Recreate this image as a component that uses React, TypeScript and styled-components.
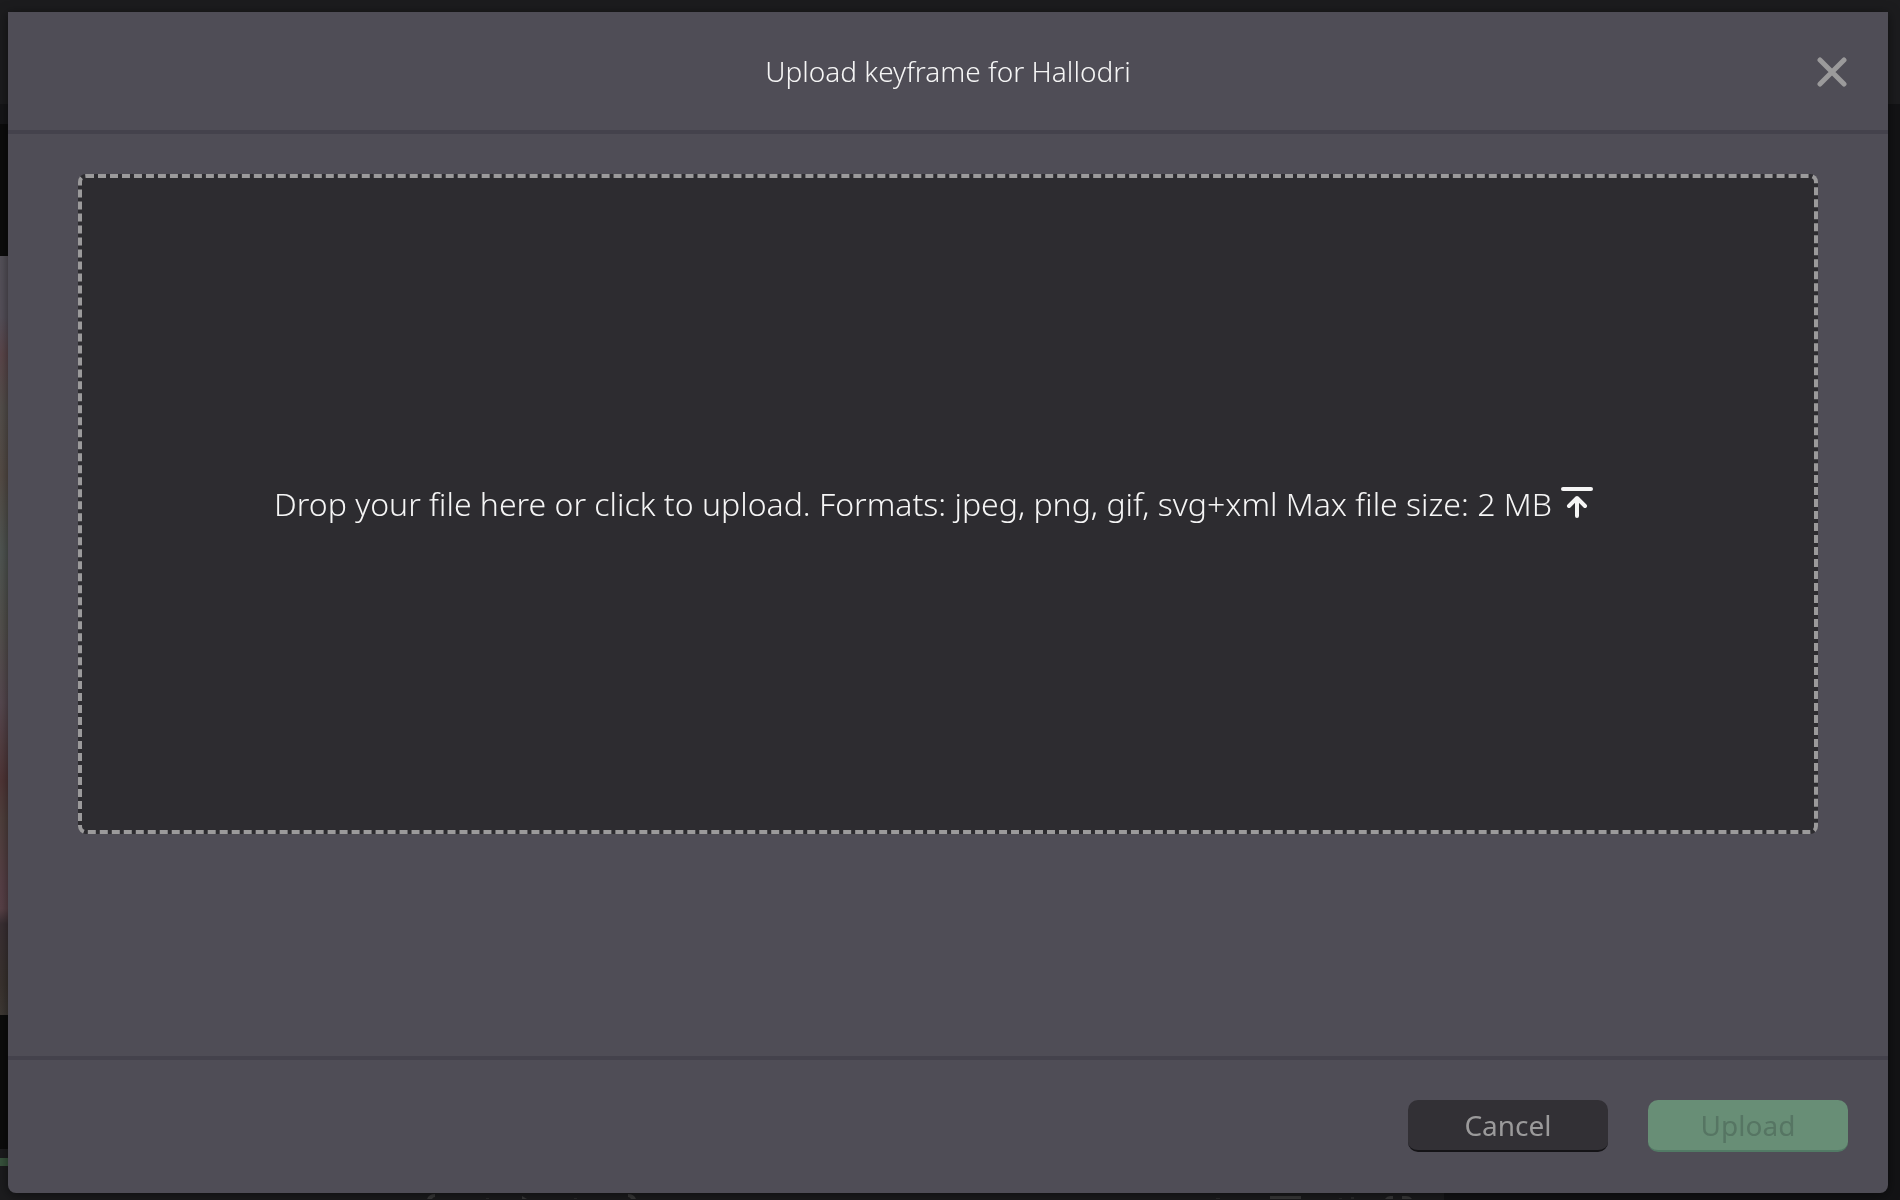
import React, { useState } from 'react';
import styled, { createGlobalStyle } from 'styled-components';

const GlobalStyle = createGlobalStyle`
  *, *::before, *::after { box-sizing: border-box; }
  html, body, #root { height: 100%; }
  body {
    margin: 0;
    overflow: hidden;
    background: #131315;
    color: #f5f5f5;
    font-family: "Noto Sans", "Open Sans", sans-serif;
  }
`;

const Editor = styled.div`
  display: flex;
  flex-direction: column;
  min-height: 100vh;
  background: #131315;
`;

const TopBar = styled.div`
  height: 104px;
  background: #1c1c1e;
`;

const Workspace = styled.div`
  flex: 1;
  display: flex;
`;

const Player = styled.div`
  flex: 0 0 76%;
  display: flex;
  flex-direction: column;
`;

const PlayerHeader = styled.div`
  height: 20px;
  background: #161618;
`;

const Stage = styled.div`
  padding: 132px 0 134px;
  background: #0c0c0c;
`;

const Frame = styled.div`
  height: 759px;
  background: linear-gradient(
    to bottom,
    #55525a 0%,
    #55505a 8%,
    #5c474b 13%,
    #544f4c 20%,
    #554c46 29%,
    #505653 39%,
    #53514d 48%,
    #574950 59%,
    #503637 69%,
    #50403d 74%,
    #584047 83%,
    #594248 86%,
    #3a3034 88%,
    #3a332f 96%,
    #3e3935 100%
  );
`;

const Controls = styled.div`
  flex: 1;
  padding-top: 9px;
  background: #1c1c1e;
`;

const Progress = styled.div`
  height: 8px;
  background: #38533d;
`;

const ControlIcons = styled.svg`
  display: block;
  margin-top: 27px;
`;

const Sidebar = styled.div`
  flex: 1;
  background: #131315;
`;

const Overlay = styled.div`
  position: fixed;
  inset: 0;
  display: flex;
  padding: 12px 12px 7px 8px;
`;

const Dialog = styled.section`
  flex: 1;
  display: flex;
  flex-direction: column;
  border-radius: 0 0 8px 8px;
  background: #4f4d56;
  box-shadow: 0 2px 12px rgba(0, 0, 0, 0.5);
`;

const Header = styled.header`
  display: grid;
  grid-template-columns: 1fr auto 1fr;
  align-items: center;
  height: 122px;
  padding: 0 40px;
  border-bottom: 4px solid #44424c;
`;

const Title = styled.h1`
  grid-column: 2;
  margin: 0;
  font-size: 28px;
  font-weight: 300;
  line-height: 40px;
`;

const CloseButton = styled.button`
  justify-self: end;
  display: flex;
  padding: 0;
  border: 0;
  background: none;
  color: #9b9a9b;
  cursor: pointer;
`;

const Body = styled.div`
  flex: 1;
  padding: 40px 70px;
`;

const DropZone = styled.label`
  display: flex;
  align-items: center;
  justify-content: center;
  gap: 8px;
  height: 660px;
  padding-right: 28px;
  border: 4px dashed #9b9a9b;
  border-radius: 8px;
  background: #2d2c30;
  font-size: 32px;
  font-weight: 300;
  line-height: 44px;
  cursor: pointer;
`;

const FileInput = styled.input`
  position: absolute;
  width: 1px;
  height: 1px;
  opacity: 0;
`;

const Footer = styled.footer`
  display: flex;
  justify-content: flex-end;
  gap: 40px;
  padding: 40px 40px 41px;
  border-top: 4px solid #44424c;
`;

const Button = styled.button<{ $primary?: boolean }>`
  width: 200px;
  height: 52px;
  padding: 0;
  border: 0;
  border-bottom: 2px solid ${(p) => (p.$primary ? '#527a65' : '#151417')};
  border-radius: 10px;
  background: ${(p) => (p.$primary ? '#688e76' : '#323035')};
  color: ${(p) => (p.$primary ? '#567563' : '#9b9a9b')};
  font-family: inherit;
  font-size: 28px;
  font-weight: 400;
  line-height: 40px;
  cursor: ${(p) => (p.$primary ? 'default' : 'pointer')};
`;

const CloseIcon = () => (
  <svg width="32" height="32" viewBox="0 0 32 32" aria-hidden="true">
    <path d="M4 5 L28 29 M28 5 L4 29" fill="none" stroke="currentColor" strokeWidth="5" strokeLinecap="round" />
  </svg>
);

const UploadIcon = () => (
  <svg width="34" height="34" viewBox="0 0 34 34" aria-hidden="true">
    <g fill="none" stroke="currentColor" strokeLinecap="round" strokeLinejoin="round" strokeWidth="4">
      <path d="M3 2 H31" />
      <path d="M17 12 V29 M9 19 L17 11 L25 19" />
    </g>
  </svg>
);

export default function App() {
  const [open, setOpen] = useState(true);
  return (
    <>
      <GlobalStyle />
      <Editor aria-hidden="true">
        <TopBar />
        <Workspace>
          <Player>
            <PlayerHeader />
            <Stage>
              <Frame />
            </Stage>
            <Controls>
              <Progress />
              <ControlIcons width="1444" height="6" viewBox="0 0 1444 6">
                <g fill="#3a3a3a">
                  <path d="M427 6 Q429 1 435 1 V4 Q433 4 432 6 Z" />
                  <path d="M522 6 V3 L527 6 Z" />
                  <path d="M628 1 Q634 1 636 6 H631 Q630 4 628 4 Z" />
                  <path d="M1270 6 V3 H1301 V6 Z" />
                  <path d="M1385 6 Q1387 3 1390 3 H1393 V6 Z M1402 6 V3 H1406 Q1410 3 1412 6 Z" />
                </g>
                <path d="M486 5 H489 V6 H486 Z M574 5 H577 V6 H574 Z M1216 5 H1220 V6 H1216 Z M1339 5 H1342 V6 H1339 Z M1351 4 H1354 V6 H1351 Z" fill="#2d2d2d" />
              </ControlIcons>
            </Controls>
          </Player>
          <Sidebar />
        </Workspace>
      </Editor>
      {open && (
        <Overlay>
          <Dialog role="dialog" aria-modal="true" aria-labelledby="upload-title">
            <Header>
              <Title id="upload-title">Upload keyframe for Hallodri</Title>
              <CloseButton type="button" aria-label="Close" onClick={() => setOpen(false)}>
                <CloseIcon />
              </CloseButton>
            </Header>
            <Body>
              <DropZone htmlFor="keyframe-file">
                <FileInput id="keyframe-file" type="file" accept="image/jpeg,image/png,image/gif,image/svg+xml" />
                <span>Drop your file here or click to upload. Formats: jpeg, png, gif, svg+xml Max file size: 2 MB</span>
                <UploadIcon />
              </DropZone>
            </Body>
            <Footer>
              <Button type="button" onClick={() => setOpen(false)}>Cancel</Button>
              <Button type="button" $primary disabled>Upload</Button>
            </Footer>
          </Dialog>
        </Overlay>
      )}
    </>
  );
}
